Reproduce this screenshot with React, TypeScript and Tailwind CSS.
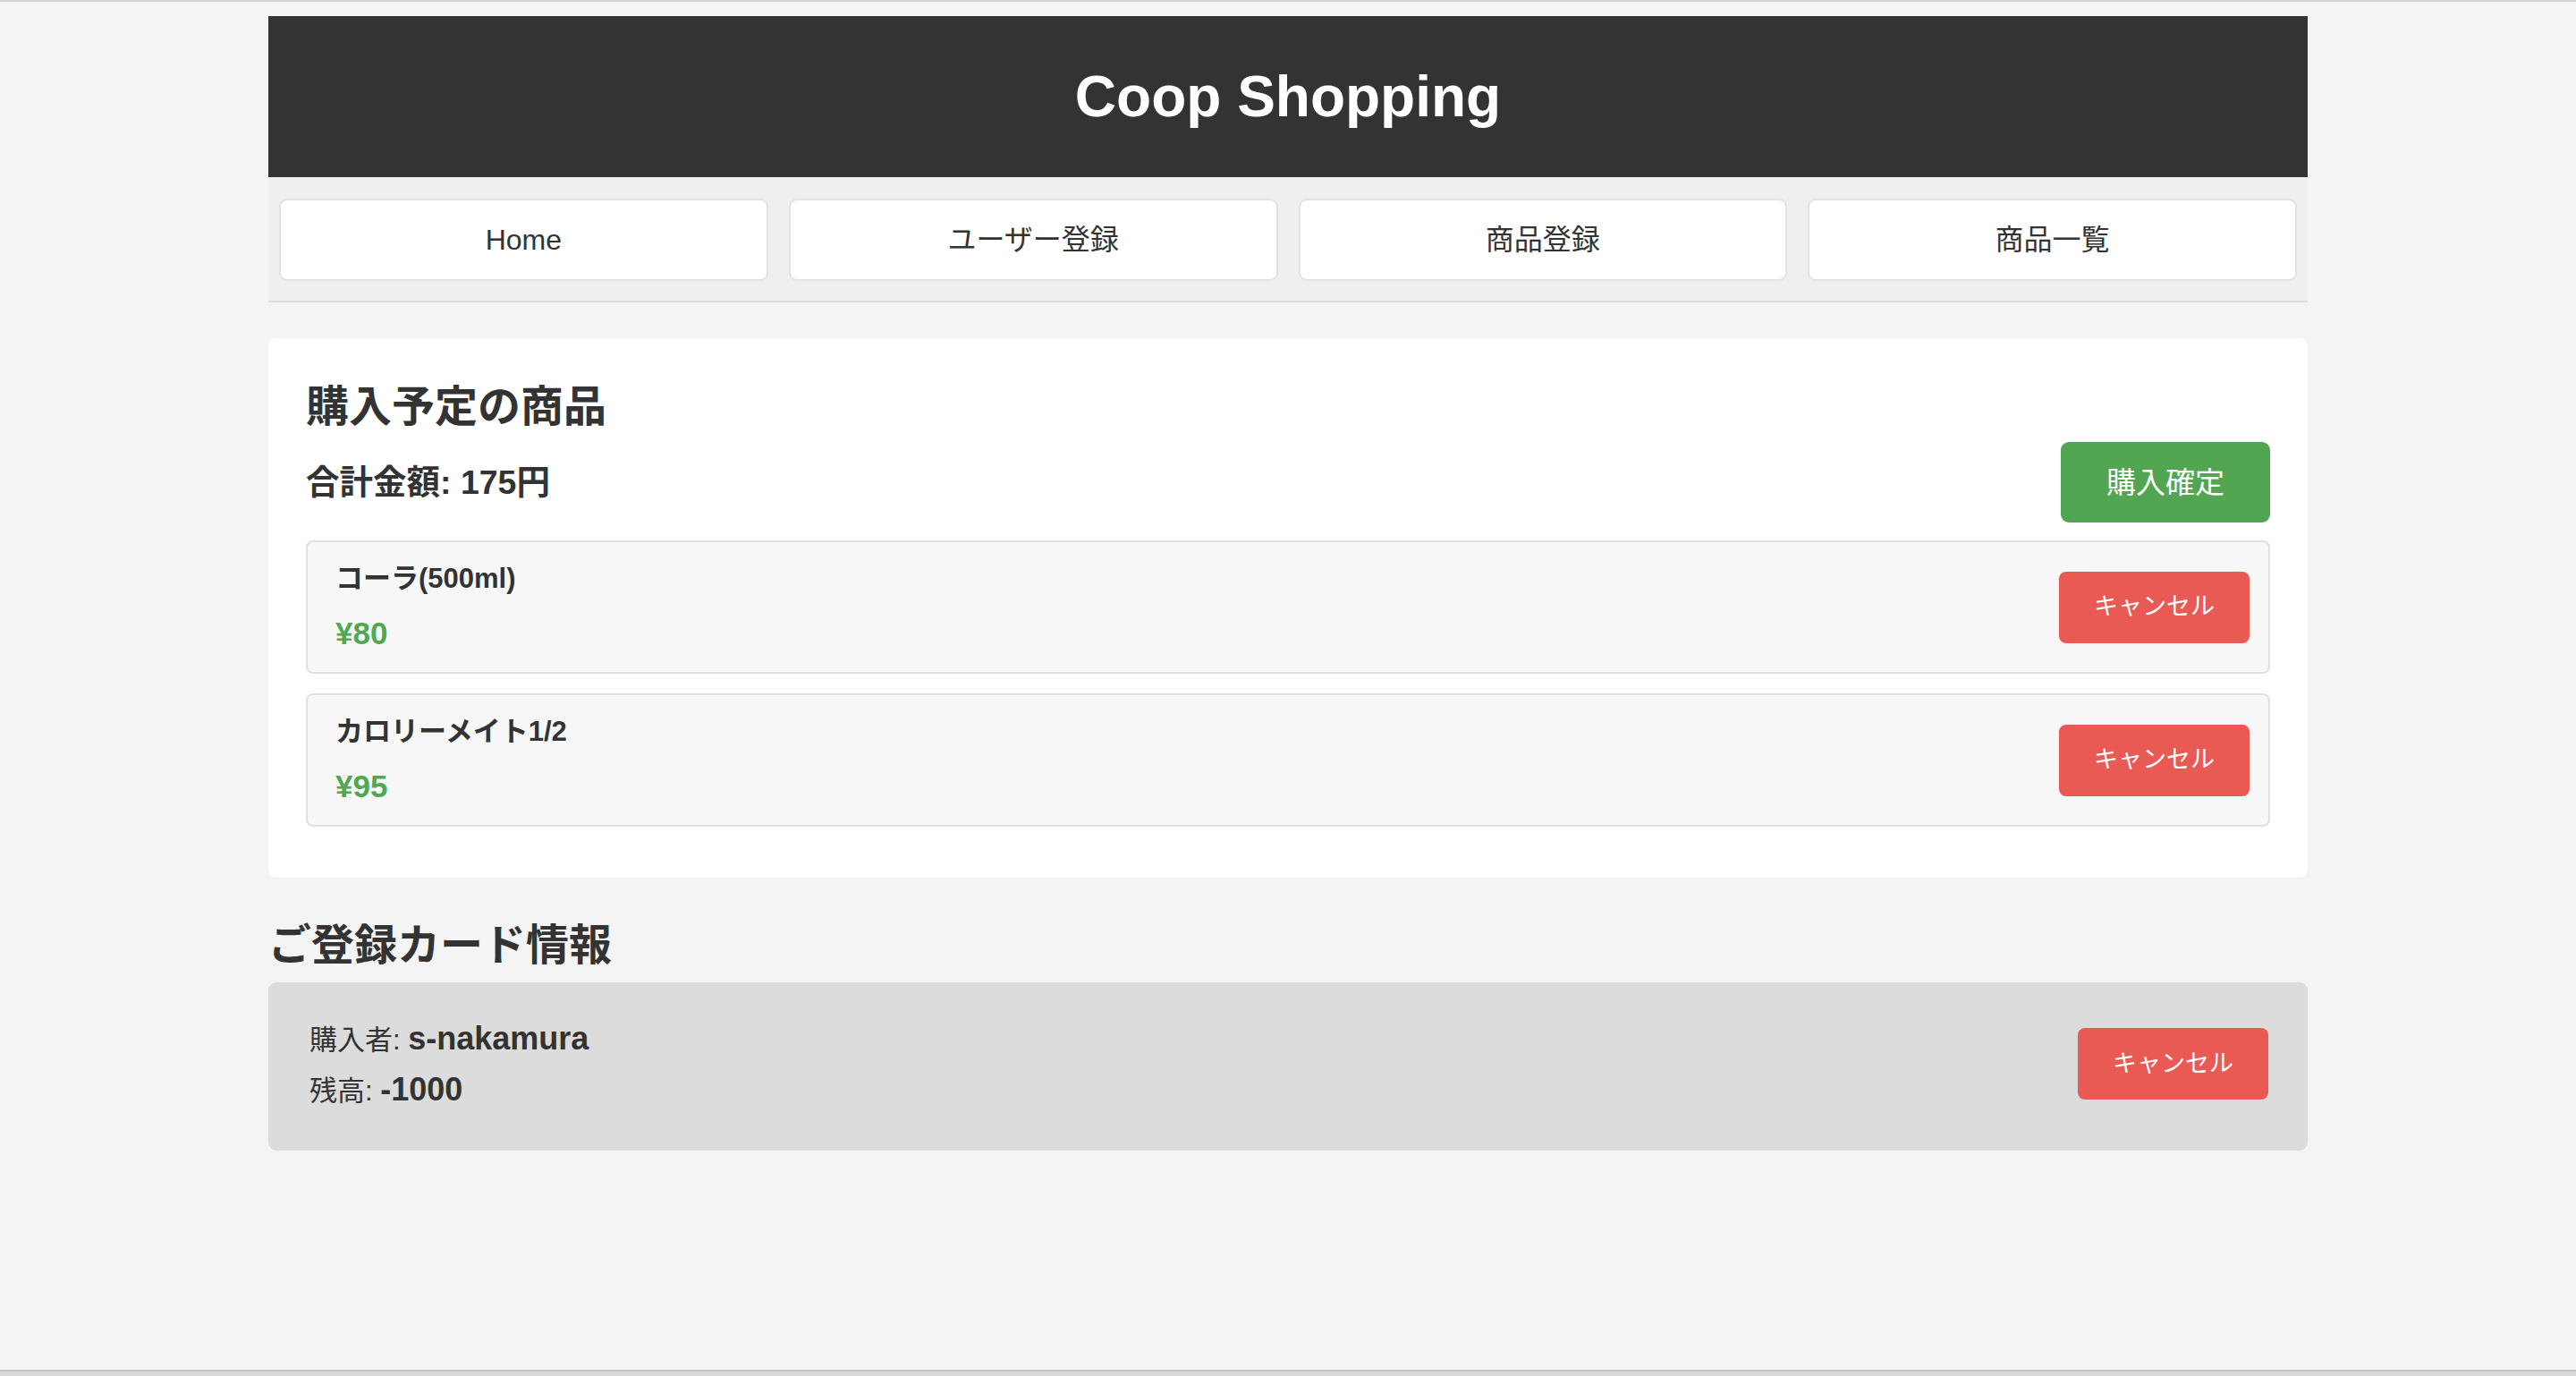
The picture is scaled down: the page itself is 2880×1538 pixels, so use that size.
import React from "react";

const FONT = { fontFamily: '"Liberation Sans", Arial, "Noto Sans CJK JP", sans-serif' };

function CancelButton() {
  return (
    <button className="w-[213px] h-[80px] shrink-0 rounded-[8px] bg-[#ea5a55] text-white text-[27px] leading-none flex items-center justify-center">
      キャンセル
    </button>
  );
}

function Item({ name, price }: { name: string; price: string }) {
  return (
    <div className="flex items-center justify-between h-[149px] pl-[31px] pr-[21px] rounded-[8px] border-2 border-[#e0e0e0] bg-[#f7f7f7]">
      <div className="flex flex-col gap-[24px]">
        <div className="text-[31px] leading-[34px] font-bold text-[#333]">{name}</div>
        <div className="text-[35px] leading-[40px] font-bold text-[#52a852]">{price}</div>
      </div>
      <CancelButton />
    </div>
  );
}

export default function App() {
  const navs = ["Home", "ユーザー登録", "商品登録", "商品一覧"];
  return (
    <div className="h-[1538px] bg-[#f4f4f4] flex flex-col text-[#333]" style={FONT}>
      <div className="h-[2px] bg-[#d2d2d2] shrink-0" />
      <div className="flex-1">
        <div className="w-[2280px] mx-auto mt-[16px]">
          <header className="h-[180px] bg-[#333333] flex items-center justify-center">
            <h1 className="text-white text-[64px] font-bold leading-none">Coop Shopping</h1>
          </header>
          <nav className="bg-[#efefef] px-[12px] pt-[24px] pb-[22px] border-b-2 border-[#dcdcdc] flex gap-[23px]">
            {navs.map((n) => (
              <div
                key={n}
                className="flex-1 h-[92px] bg-white border-2 border-[#e2e2e2] rounded-[9px] flex items-center justify-center text-[32px] text-[#333]"
              >
                {n}
              </div>
            ))}
          </nav>

          <section className="mt-[40px] bg-white rounded-[9px] px-[42px] pt-[49px] pb-[57px]">
            <h2 className="text-[48px] leading-[56px] font-bold text-[#333]">購入予定の商品</h2>
            <div className="mt-[11px] h-[90px] flex items-center justify-between">
              <div className="text-[37.5px] font-bold text-[#333]">合計金額: 175円</div>
              <button className="h-[90px] px-[51px] rounded-[9px] bg-[#52a652] text-white text-[33px] leading-none">
                購入確定
              </button>
            </div>
            <div className="mt-[20px] flex flex-col gap-[22px]">
              <Item name="コーラ(500ml)" price="¥80" />
              <Item name="カロリーメイト1/2" price="¥95" />
            </div>
          </section>

          <h2 className="mt-[48px] text-[48px] leading-[56px] font-bold text-[#333]">ご登録カード情報</h2>
          <div className="mt-[13px] bg-[#dcdcdc] rounded-[9px] pl-[46px] pr-[44px] pt-[34px] pb-[40px] flex items-center justify-between">
            <div>
              <div className="h-[57px] leading-[57px]">
                <span className="text-[31px]">購入者: </span>
                <span className="text-[36px] font-bold">s-nakamura</span>
              </div>
              <div className="h-[57px] leading-[57px]">
                <span className="text-[31px]">残高: </span>
                <span className="text-[36px] font-bold">-1000</span>
              </div>
            </div>
            <CancelButton />
          </div>
        </div>
      </div>
      <div className="h-[2px] bg-[#c4c4c4] shrink-0" />
      <div className="h-[5px] bg-[#dadada] shrink-0" />
    </div>
  );
}
